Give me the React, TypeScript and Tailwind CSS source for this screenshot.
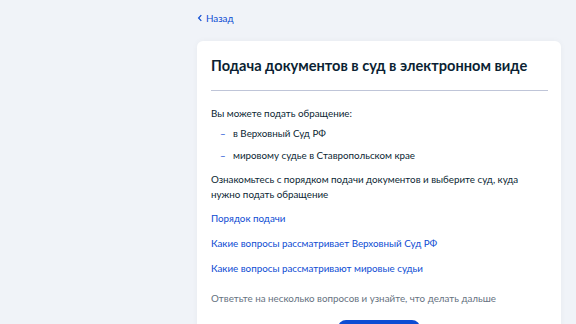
import React from "react";

export default function App() {
  return (
    <div className="w-[576px] h-[324px] overflow-hidden bg-[#f0f3f8] text-[#0b1f33]" style={{ fontFamily: "Lato, 'Noto Sans', sans-serif" }}>
      <div className="ml-[197px] w-[364px]">
        <div className="flex items-center h-[36px] text-[9.8px] text-[#0d4cd3]">
          <svg width="6" height="8" viewBox="0 0 6 8" className="mr-[3px]">
            <path d="M4.3 1.2 L1.6 4 L4.3 6.8" fill="none" stroke="#0d4cd3" strokeWidth="1.2" />
          </svg>
          <span>Назад</span>
        </div>
        <div className="mt-[5px] bg-white rounded-[6px] shadow-[0_0_6px_rgba(0,0,0,0.04)] px-[14px] pt-[15px] pb-[20px]">
          <h1 className="text-[14.6px] leading-[20px] font-bold text-[#0b1f33]">Подача документов в суд в электронном виде</h1>
          <div className="mt-[14px] mr-[-1px] h-px bg-[#bfc5d8]" />
          <p className="mt-[15px] text-[9.8px] leading-[15px]">Вы можете подать обращение:</p>
          <ul className="mt-[5px] flex flex-col gap-[7px] text-[9.8px] leading-[15px]">
            <li className="flex">
              <span className="ml-[9px] w-[13px] text-[#0d4cd3]">–</span>
              <span>в Верховный Суд РФ</span>
            </li>
            <li className="flex">
              <span className="ml-[9px] w-[13px] text-[#0d4cd3]">–</span>
              <span>мировому судье в Ставропольском крае</span>
            </li>
          </ul>
          <p className="mt-[9px] text-[9.8px] leading-[15px] w-[320px]">Ознакомьтесь с порядком подачи документов и выберите суд, куда нужно подать обращение</p>
          <div className="mt-[9px] flex flex-col gap-[10px] text-[9.8px] leading-[15px] text-[#0d4cd3]">
            <span>Порядок подачи</span>
            <span>Какие вопросы рассматривает Верховный Суд РФ</span>
            <span>Какие вопросы рассматривают мировые судьи</span>
          </div>
          <p className="mt-[15px] text-[9.8px] leading-[15px] text-[#66727f]">Ответьте на несколько вопросов и узнайте, что делать дальше</p>
          <div className="mt-[14px] flex justify-center">
            <div className="h-[32px] w-[82px] rounded-[8px] bg-[#0d4cd3]" />
          </div>
        </div>
      </div>
    </div>
  );
}
